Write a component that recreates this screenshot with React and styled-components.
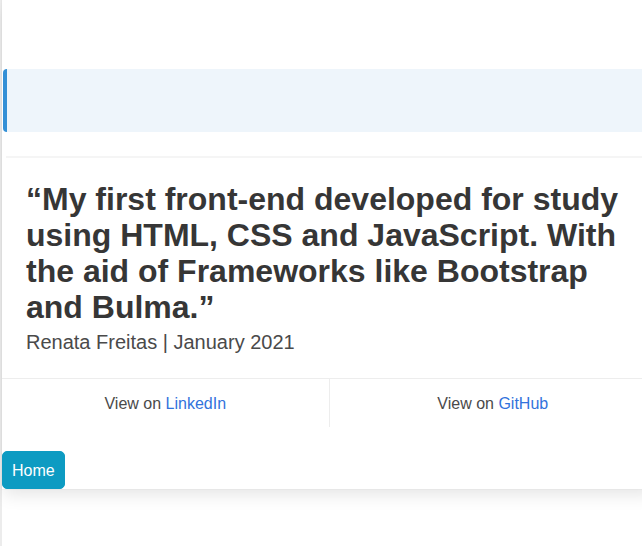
import styled, { createGlobalStyle } from "styled-components";

const GlobalStyle = createGlobalStyle`
  html, body {
    margin: 0;
    padding: 0;
    background: #fff;
    overflow: hidden;
    font-family: "Liberation Sans", Arial, Helvetica, sans-serif;
  }
`;

const links = [
  { label: "LinkedIn", url: "#linkedin" },
  { label: "GitHub", url: "#github" },
];

export default function App() {
  return (
    <Page>
      <GlobalStyle />
      <Card>
        <Notice />
        <Divider />
        <CardContent>
          <Quote>
            “My first front-end developed for study using HTML, CSS and
            JavaScript. With the aid of Frameworks like Bootstrap and Bulma.”
          </Quote>
          <Byline>Renata Freitas | January 2021</Byline>
        </CardContent>
        <CardFooter>
          {links.map((link, i) => (
            <FooterItem key={link.label} first={i === 0}>
              View on <FooterLink href={link.url}>{link.label}</FooterLink>
            </FooterItem>
          ))}
        </CardFooter>
        <HomeButton>Home</HomeButton>
      </Card>
    </Page>
  );
}

const Page = styled.div`
  min-height: 546px;
  border-left: 2px solid #ececec;
  box-sizing: border-box;
`;

const Card = styled.div`
  width: 654px;
  background: #fff;
  box-shadow: 0 8px 16px -2px rgba(10, 10, 10, 0.1),
    0 0 0 1px rgba(10, 10, 10, 0.02);
  padding-top: 69px;
`;

const Notice = styled.div`
  margin-left: 1px;
  height: 63px;
  background: #eef5fb;
  border-left: 4px solid #3490d6;
  border-radius: 4px;
`;

const Divider = styled.hr`
  margin: 24px 0 0 4px;
  height: 2px;
  border: none;
  background: #f5f5f5;
`;

const CardContent = styled.div`
  padding: 23px 24px 23px;
`;

const Quote = styled.h1`
  margin: 0;
  font-size: 32px;
  font-weight: 700;
  line-height: 36px;
  color: #363636;
`;

const Byline = styled.p`
  margin: 5px 0 0;
  font-size: 20px;
  line-height: 25px;
  color: #4a4a4a;
`;

const CardFooter = styled.div`
  display: flex;
  border-top: 1px solid #ededed;
`;

const FooterItem = styled.div`
  flex: 1;
  padding: 13px 12px 11px;
  font-size: 16px;
  line-height: 24px;
  text-align: center;
  color: #4a4a4a;
  border-left: ${(props) => (props.first ? "none" : "1px solid #ededed")};
`;

const FooterLink = styled.a`
  color: #3273dc;
  text-decoration: none;
`;

const HomeButton = styled.button`
  display: block;
  margin-top: 24px;
  padding: 7px 9px 5px;
  border: 1px solid #0d9bc2;
  border-radius: 5px;
  background: #0d9bc2;
  color: #fff;
  font-family: "Liberation Sans", Arial, Helvetica, sans-serif;
  font-size: 16px;
  line-height: 24px;
  cursor: pointer;
`;
